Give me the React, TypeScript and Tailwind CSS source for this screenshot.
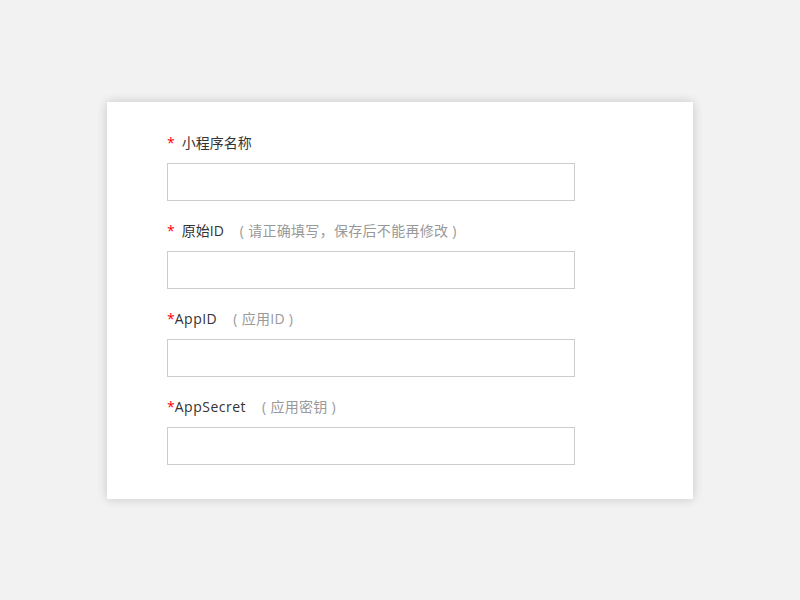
import React from "react";

const fields = [
  { label: "小程序名称", hint: "", space: true },
  { label: "原始ID", hint: "( 请正确填写，保存后不能再修改 )", space: true },
  { label: "AppID", hint: "( 应用ID )", space: false },
  { label: "AppSecret", hint: "( 应用密钥 )", space: false },
];

export default function App() {
  return (
    <div
      className="w-[800px] h-[600px] bg-[#f2f2f2] flex items-center justify-center"
      style={{ fontFamily: '"Open Sans", "Noto Sans CJK SC", sans-serif' }}
    >
      <div className="w-[586px] h-[397px] bg-white shadow-[0_0_10px_rgba(0,0,0,0.18)] pt-[31px] pl-[60px]">
        {fields.map((f, i) => (
          <div key={i} className={i < fields.length - 1 ? "mb-5" : ""}>
            <div className="h-5 leading-5 mb-[10px] text-[14px] text-[#333] flex items-center whitespace-nowrap">
              <span className="text-[#f00] text-[14px]">*</span>
              {f.space && <span className="w-[7px]" />}
              <span className={f.space ? "" : "tracking-[0.5px]"}>{f.label}</span>
              {f.hint && (
                <span className="text-[#999] ml-[16px] tracking-[0.3px]">{f.hint}</span>
              )}
            </div>
            <input
              type="text"
              className="block w-[408px] h-[38px] border border-[#ccc] bg-white outline-none"
            />
          </div>
        ))}
      </div>
    </div>
  );
}
